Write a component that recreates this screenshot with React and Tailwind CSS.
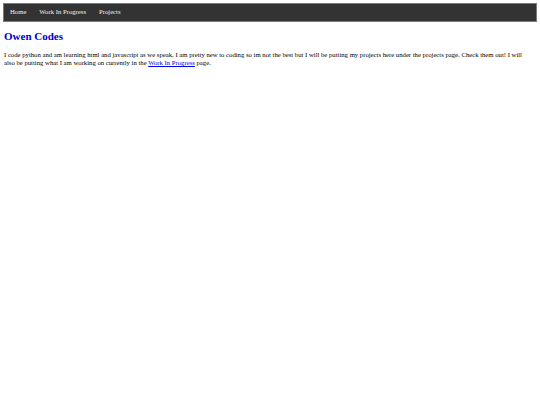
export default function App() {
  return (
    <div className="min-h-[405px] bg-white px-[3px] pt-[3px] font-['Liberation_Serif',serif] text-black">
      <nav className="flex h-[19px] items-center gap-[13px] border border-[#7a7a7a] bg-[#333333] px-[6px] text-[6.7px] font-normal text-[#f2f2f2]">
        <a href="#">Home</a>
        <a href="#">Work In Progress</a>
        <a href="#">Projects</a>
      </nav>
      <h1 className="mt-[7px] px-px text-[11px] font-bold leading-[14px] text-[#0000cd]">Owen Codes</h1>
      <p className="mt-[8px] mr-[7px] px-px text-[6.7px] leading-[8px]">
        I code python and am learning html and javascript as we speak, I am pretty new to coding so im not the best but I will be putting my projects here under the projects page. Check them out! I will also be putting what I am working on currently in the{" "}
        <a href="#" className="text-[#0000ee] underline">Work In Progress</a> page.
      </p>
    </div>
  );
}
